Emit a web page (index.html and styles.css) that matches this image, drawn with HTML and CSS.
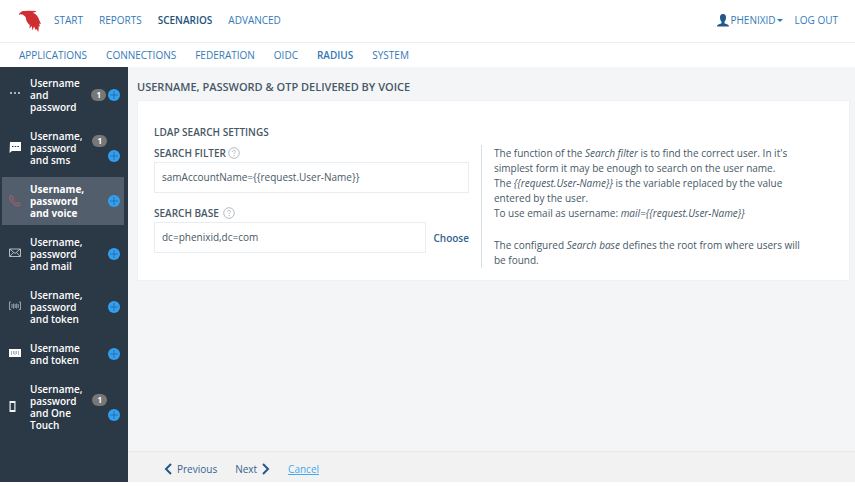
FILE: index.html
```html
<!DOCTYPE html>
<html lang="en">
<head>
  <meta charset="UTF-8" />
  <meta name="viewport" content="width=device-width, initial-scale=1" />
  <title>PhenixID - RADIUS scenarios</title>
  <link rel="stylesheet" href="styles.css">
</head>
<body>

  <!-- shared icons -->
  <svg class="sprite" aria-hidden="true">
    <symbol id="plus" viewBox="0 0 12 12">
      <circle cx="6" cy="6" r="6" fill="#32a0f0" />
      <path d="M6 2v8M2 6h8" stroke="#286ca8" stroke-width="0.9" fill="none" />
    </symbol>
    <symbol id="help" viewBox="0 0 12 12">
      <circle cx="6" cy="6" r="5.300" fill="none" stroke="#a2a9b0" stroke-width="0.8" />
      <path d="M4.500 4.900c0-2 3-2 3-.2 0 1.100-1.500 1.200-1.500 2.300M6 8v1" fill="none" stroke="#a2a9b0" stroke-width="0.8" />
    </symbol>
  </svg>

  <header class="topbar">
    <a class="logo" href="#" aria-label="PhenixID">
      <svg width="24" height="24" viewBox="0 0 24 24">
        <path d="M1 6C2.500 3.500 4.500 3 7 3l3-.2 8.500.2c-1 1.200-2.500 1.400-4 1.600 3.500 1.200 5.500 3.900 6.500 6.900l2 4.500-1.700-.6.500 3.200-1.100-.4-.3 5.800-2-3-.7 1-1.700-3.600-1.600 4-.6-4.400-2.300 2.500.2-3.500C9.500 15 8 12.500 7.800 9.500 6.800 7.500 4.500 6 2.500 6.200L1.300 7z" fill="#cf2f32" />
      </svg>
    </a>
    <nav class="main-nav">
      <a href="#">START</a>
      <a href="#">REPORTS</a>
      <a href="#" class="active">SCENARIOS</a>
      <a href="#">ADVANCED</a>
    </nav>
    <div class="account">
      <a href="#" class="user">
        <svg width="12" height="13" viewBox="0 0 12 13"><path d="M6 0C3.500 0 2.800 1.800 3 4c.1 2 .8 3 1.500 3.700v1.500C3.500 10.200 0 10 0 12.500h12c0-2.500-3.500-2.300-4.500-3.300V7.700C8.200 7 8.900 6 9 4c.2-2.200-.5-4-3-4z" fill="#23588c" /></svg>
        <span>PHENIXID</span>
        <i class="caret"></i>
      </a>
      <a href="#">LOG OUT</a>
    </div>
  </header>

  <nav class="sub-nav">
    <a href="#">APPLICATIONS</a>
    <a href="#">CONNECTIONS</a>
    <a href="#">FEDERATION</a>
    <a href="#">OIDC</a>
    <a href="#" class="active">RADIUS</a>
    <a href="#">SYSTEM</a>
  </nav>

  <div class="layout">
    <ul class="sidebar">
      <li>
        <svg class="icon" viewBox="0 0 12 12"><path d="M1 3h2v2H1zM5 3h2v2H5zM9 3h2v2H9z" fill="#aab2ba" /></svg>
        <a href="#">Username and password</a>
        <span class="tools inline"><span class="badge">1</span><button aria-label="Add"><svg><use href="#plus" /></svg></button></span>
      </li>
      <li>
        <svg class="icon" viewBox="0 0 12 12"><path d="M1 0h11v9H3l-2.500 2z" fill="#fff" /><path d="M3 4h1.500v1H3zM5.700 4h1.500v1H5.700zM8.400 4h1.500v1H8.400z" fill="#2b3846" /></svg>
        <a href="#">Username, password and sms</a>
        <span class="tools"><span class="badge">1</span><button aria-label="Add"><svg><use href="#plus" /></svg></button></span>
      </li>
      <li class="active">
        <svg class="icon" viewBox="0 0 12 12"><path d="M2.200.3.900 1.500c-.8 2 1 5 3 6.900s4.500 3 6.200 2.300l1.200-1.300-2.400-2-1.300 1C6.300 8 4 5.700 3.500 4.200l1-1.300z" fill="none" stroke="#c4606c" stroke-width="0.9" stroke-linejoin="round" /></svg>
        <a href="#">Username, password and voice</a>
        <span class="tools"><button aria-label="Add"><svg><use href="#plus" /></svg></button></span>
      </li>
      <li>
        <svg class="icon" viewBox="0 0 12 12"><path d="M.5 1h11v7.500H.5zM1 1.300l5 4.200 5-4.200M1 8.200l3.500-3.700M11 8.200 7.500 4.500" fill="none" stroke="#c3c8cd" stroke-width="0.9" /></svg>
        <a href="#">Username, password and mail</a>
        <span class="tools"><button aria-label="Add"><svg><use href="#plus" /></svg></button></span>
      </li>
      <li>
        <svg class="icon" viewBox="0 0 12 12"><path d="M2 1H.5v7.500H2M10 1h1.500v7.500H10M3 3v4M4.600 2.500v5M6.200 3v4M7.700 2.500v5M9.200 3v4" fill="none" stroke="#b4bac0" stroke-width="0.8" /></svg>
        <a href="#">Username, password and token</a>
        <span class="tools"><button aria-label="Add"><svg><use href="#plus" /></svg></button></span>
      </li>
      <li>
        <svg class="icon" viewBox="0 0 12 12"><path d="M0 1h12v8H0z" fill="#fff" /><path d="M2.500 3v4M4.500 3v3M6 3v4M7.500 3v3M9.500 3v4" stroke="#87909a" stroke-width="0.7" /></svg>
        <a href="#">Username and token</a>
        <span class="tools"><button aria-label="Add"><svg><use href="#plus" /></svg></button></span>
      </li>
      <li>
        <svg class="icon" viewBox="0 0 12 12"><path d="M.500 0h6v11h-6z" fill="#f2f3f4" /><path d="M1.700 2h3.600v7H1.700z" fill="#2b3846" /></svg>
        <a href="#">Username, password and One Touch</a>
        <span class="tools"><span class="badge">1</span><button aria-label="Add"><svg><use href="#plus" /></svg></button></span>
      </li>
    </ul>

    <div class="content">
      <main>
        <h1>USERNAME, PASSWORD &amp; OTP DELIVERED BY VOICE</h1>
        <section class="panel">
          <form class="settings">
            <h2>LDAP SEARCH SETTINGS</h2>
            <div class="label-row">
              <label for="filter">SEARCH FILTER</label>
              <svg class="help"><use href="#help" /></svg>
            </div>
            <input id="filter" type="text" value="samAccountName={{request.User-Name}}">
            <div class="label-row wide">
              <label for="base">SEARCH BASE</label>
              <svg class="help"><use href="#help" /></svg>
            </div>
            <div class="field-row">
              <input id="base" type="text" value="dc=phenixid,dc=com">
              <a href="#">Choose</a>
            </div>
          </form>
          <div class="info">
            <p>The function of the <em>Search filter</em> is to find the correct user. In it's simplest form it may be enough to search on the user name.<br>
            The <em>{{request.User-Name}}</em> is the variable replaced by the value entered by the user.<br>
            To use email as username: <em>mail={{request.User-Name}}</em></p>
            <p>The configured <em>Search base</em> defines the root from where users will be found.</p>
          </div>
        </section>
      </main>

      <footer>
        <button>
          <svg width="8" height="12" viewBox="0 0 8 12"><path d="M7 1 2 6l5 5" /></svg>
          Previous
        </button>
        <button>
          Next
          <svg width="8" height="12" viewBox="0 0 8 12"><path d="m1 1 5 5-5 5" /></svg>
        </button>
        <a href="#" class="cancel">Cancel</a>
      </footer>
    </div>
  </div>

</body>
</html>
```
FILE: styles.css
```css
* {
  box-sizing: border-box;
}

body {
  display: flex;
  flex-direction: column;
  min-height: 100vh;
  margin: 0;
  padding-bottom: 4px;
  font-family: "Open Sans", sans-serif;
  font-size: 10px;
  color: #475866;
  background: #fff;
}

a {
  color: #337ab7;
  text-decoration: none;
}

button {
  padding: 0;
  border: none;
  background: none;
  font: inherit;
  color: inherit;
  cursor: pointer;
}

.sprite {
  position: absolute;
  width: 0;
  height: 0;
}

/* navigation */
.topbar {
  display: flex;
  align-items: center;
  height: 43px;
  padding: 0 17px 2px 18px;
  border-bottom: 1px solid #eee;
}

.logo {
  height: 24px;
  margin-right: 12px;
}

.main-nav,
.account {
  display: flex;
  gap: 16px;
}

.account {
  gap: 12px;
  margin-left: auto;
}

.main-nav .active {
  font-weight: 600;
  color: #23527c;
}

.user {
  display: flex;
  align-items: center;
  gap: 1px;
}

.caret {
  border: 3px solid transparent;
  border-top-color: currentColor;
  border-bottom: none;
}

.sub-nav {
  display: flex;
  align-items: center;
  gap: 19px;
  height: 24px;
  padding: 0 19px;
}

.sub-nav .active {
  font-weight: 600;
}

.layout {
  display: flex;
  flex: 1;
}

/* sidebar */
.sidebar {
  width: 128px;
  flex: none;
  margin: 0;
  padding: 4px 4px 0 2px;
  list-style: none;
  background: #2b3846;
}

.sidebar li {
  display: flex;
  align-items: center;
  margin-bottom: 5px;
  padding: 6px 4px 6px 7px;
}

.sidebar li.active {
  background: #525e6b;
}

.sidebar a {
  width: 58px;
  margin-left: 9px;
  font-weight: 600;
  line-height: 12px;
  color: #fff;
}

.sidebar .active a {
  font-weight: 700;
}

.icon {
  width: 12px;
  height: 12px;
  flex: none;
}

.tools {
  display: flex;
  flex-direction: column;
  align-items: flex-end;
  gap: 3px;
  margin-left: auto;
}

.tools.inline {
  flex-direction: row;
  align-items: center;
  gap: 2px;
}

.tools button,
.tools svg {
  display: block;
  width: 12px;
  height: 12px;
}

.badge {
  padding: 0 5px;
  border-radius: 6px;
  font-size: 8px;
  font-weight: 700;
  line-height: 12px;
  color: #fff;
  background: #777;
}

.tools:not(.inline) .badge {
  margin-right: 13px;
}

/* content */
.content {
  display: flex;
  flex: 1;
  flex-direction: column;
  background: #f3f5f7;
}

main {
  flex: 1;
  padding: 12px 5px 0 9px;
}

h1 {
  margin: 0 0 5px;
  font-size: 11px;
  font-weight: 600;
  line-height: 16px;
}

.panel {
  display: flex;
  padding: 24px 48px 12px 16px;
  border: 1px solid #edf0f4;
  background: #fff;
}

.settings {
  width: 315px;
  flex: none;
}

h2 {
  margin: 0 0 7px;
  font-size: 10px;
  font-weight: 600;
  line-height: 14px;
}

.label-row {
  display: flex;
  align-items: center;
  gap: 2px;
  height: 14px;
  margin-bottom: 2px;
  font-weight: 600;
}

.label-row.wide {
  gap: 4px;
  margin-top: 13px;
}

.help {
  width: 12px;
  height: 12px;
}

input {
  display: block;
  width: 100%;
  height: 31px;
  padding: 0 7px 1px;
  border: 1px solid #e8ecf3;
  font: inherit;
  color: inherit;
}

.field-row {
  display: flex;
  align-items: center;
  gap: 7px;
}

.field-row input {
  flex: 1;
  min-width: 0;
}

.field-row a {
  font-weight: 600;
  color: #34628f;
}

.info {
  flex: 1;
  margin: 20px 0 0 12px;
  padding: 1px 0 0 12px;
  border-left: 1px solid #d8dde2;
  line-height: 15px;
}

.info p {
  margin: 0 0 17px;
}

.info p:last-child {
  margin: 0;
}

footer {
  display: flex;
  align-items: center;
  gap: 18px;
  height: 31px;
  padding: 4px 36px 0;
  border-top: 1px solid #e8e8e8;
  color: #34628f;
  background: #f2f2f2;
}

footer button {
  display: flex;
  align-items: center;
  gap: 5px;
}

footer path {
  fill: none;
  stroke: #23588c;
  stroke-width: 2;
}

.cancel {
  color: #45a9ee;
  text-decoration: underline;
}
```
